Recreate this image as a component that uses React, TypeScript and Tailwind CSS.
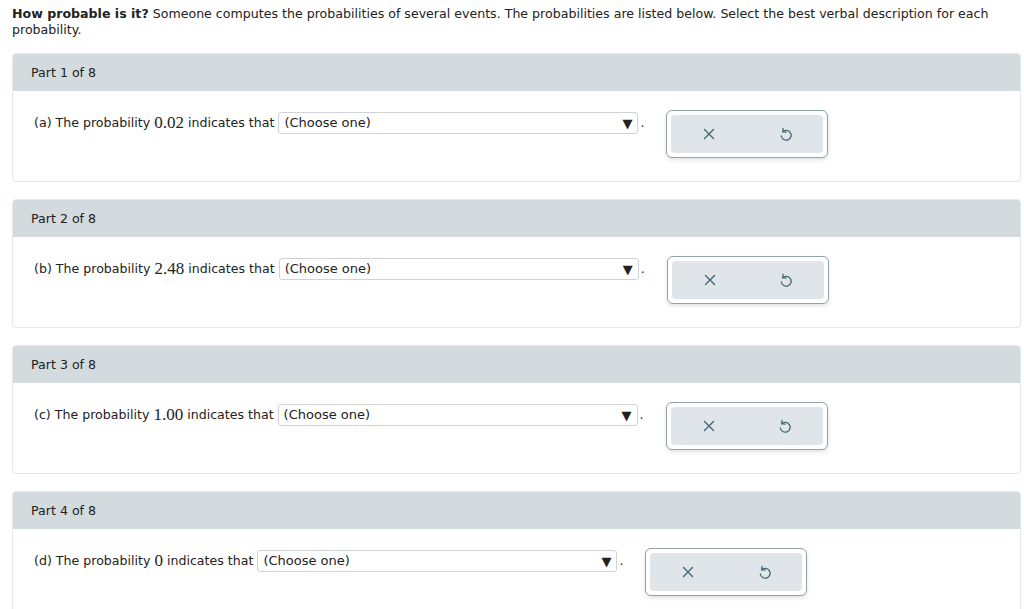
const parts = [
  { label: "(a)", value: "0.02" },
  { label: "(b)", value: "2.48" },
  { label: "(c)", value: "1.00" },
  { label: "(d)", value: "0" },
];

function ClearIcon() {
  return (
    <svg width="12" height="12" viewBox="0 0 12 12" fill="none" stroke="#3f6772" strokeWidth="1.4" strokeLinecap="round">
      <path d="M1.5 1.5 L10.5 10.5 M10.5 1.5 L1.5 10.5" />
    </svg>
  );
}

function UndoIcon() {
  return (
    <svg width="13" height="15" viewBox="0 0 12 14" fill="none" stroke="#3f6772" strokeWidth="1.2" strokeLinecap="round" strokeLinejoin="round">
      <path d="M3.4 4.4 A4.6 4.6 0 1 1 2.1 8.4" />
      <path d="M3.8 1.2 L3.4 4.4 L6.4 4.8" />
    </svg>
  );
}

function Part({ n, label, value }: { n: number; label: string; value: string }) {
  return (
    <div className="mb-[17px] rounded-[4px] border border-[#e3e8ea]">
      <div className="flex h-[37px] items-center rounded-t-[3px] bg-[#d3dbde] pl-[18px] text-[#222]">
        Part {n} of 8
      </div>
      <div className="flex h-[90px] items-start pl-[21px] pt-[20px]">
        <div className="mt-[1px] flex items-center text-[#222]">
          <span>{label} The probability&nbsp;</span>
          <span className="font-['Liberation_Serif',serif] text-[17px]">{value}</span>
          <span>&nbsp;indicates that&nbsp;</span>
          <div className="flex h-[22px] w-[360px] items-center justify-between rounded-[3px] border border-[#cfd3d5] pl-[5px] pr-[5px]">
            <span className="text-[13px]">(Choose one)</span>
            <span className="text-[13px] leading-none text-[#222]">▼</span>
          </div>
          <span className="ml-[2px]">.</span>
        </div>
        <div className="-mt-[1px] ml-[22px] rounded-[6px] border border-[#8fa3a9] bg-white p-[4px] shadow-[0_2px_4px_rgba(0,0,0,0.12)]">
          <div className="flex h-[38px] w-[152px] items-center rounded-[4px] bg-[#dfe5e8]">
            <div className="flex w-1/2 justify-center">
              <ClearIcon />
            </div>
            <div className="flex w-1/2 justify-center">
              <UndoIcon />
            </div>
          </div>
        </div>
      </div>
    </div>
  );
}

export default function App() {
  return (
    <div className="h-[609px] overflow-hidden bg-white pl-[12px] pr-[3px] pt-[6px] font-['DejaVu_Sans',Verdana,sans-serif] text-[12.6px] leading-[16px] text-[#222]">
      <p className="pr-[30px]">
        <b>How probable is it?</b> Someone computes the probabilities of several events. The probabilities are listed below. Select the best verbal description for each probability.
      </p>
      <div className="mt-[15px]">
        {parts.map((p, i) => (
          <Part key={i} n={i + 1} label={p.label} value={p.value} />
        ))}
      </div>
    </div>
  );
}
